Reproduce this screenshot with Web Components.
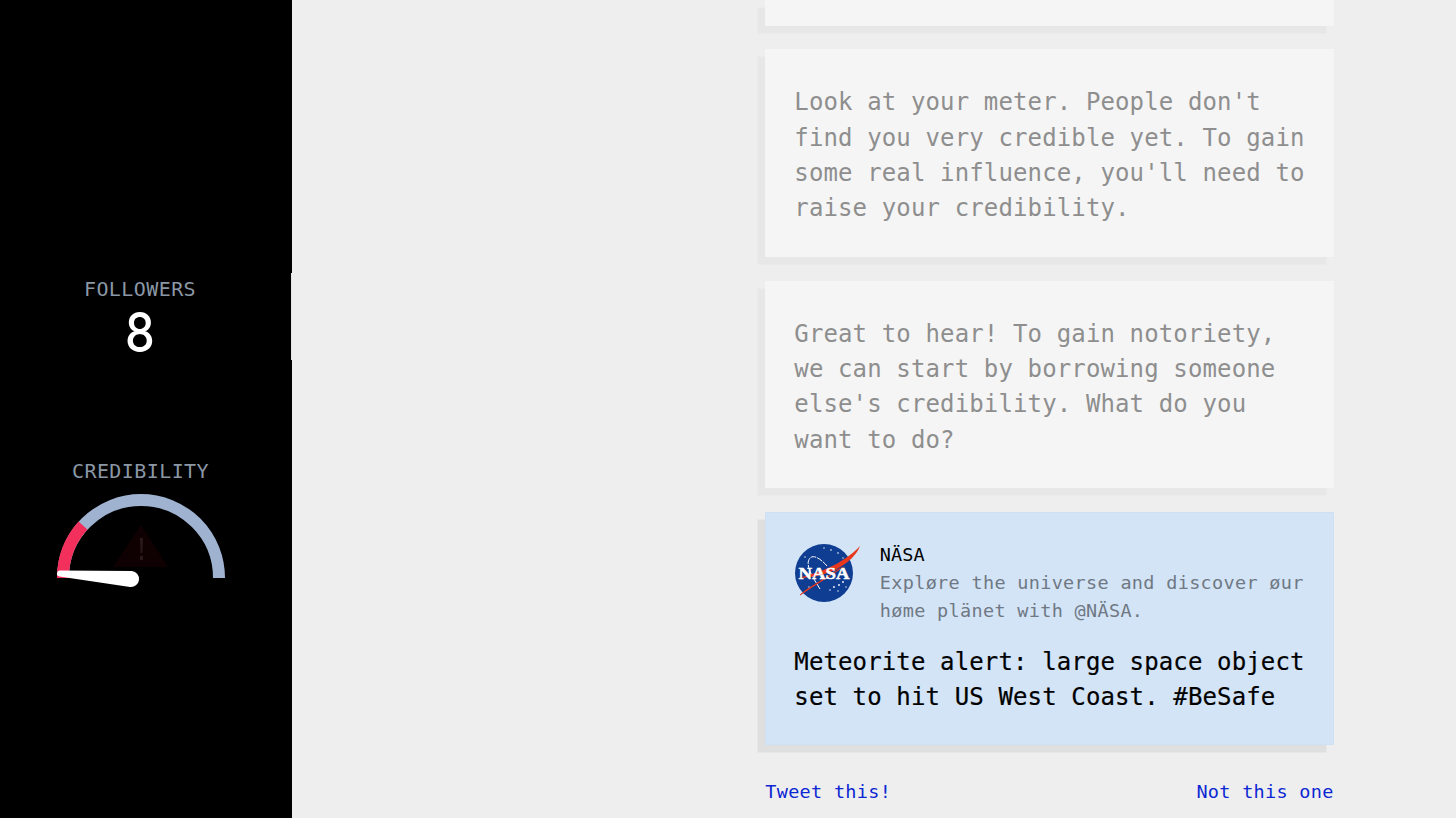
<!DOCTYPE html>
<html lang="en">
<head>
<meta charset="UTF-8">
<title>Credibility</title>
<style>
    html, body { margin: 0; height: 100%; overflow: hidden; background: #eee; }
    body { font-family: "DejaVu Sans Mono", "Liberation Mono", monospace; }
</style>
</head>
<body>
<game-screen>
    <side-stat slot="side" label="FOLLOWERS" value="8"></side-stat>
    <credibility-gauge slot="side"></credibility-gauge>

    <chat-card class="cut" style="--h: 25.600px; margin-bottom: -.3px"></chat-card>
    <chat-card>Look at your meter. People don't find you very credible yet. To gain some real influence, you'll need to raise your credibility.</chat-card>
    <chat-card>Great to hear! To gain notoriety, we can start by borrowing someone else's credibility. What do you want to do?</chat-card>
    <tweet-card name="NÄSA" bio="Expløre the universe and discover øur høme plänet with @NÄSA.">Meteorite alert: large space object set to hit US West Coast. #BeSafe</tweet-card>
    <tweet-actions></tweet-actions>
</game-screen>

<script type="text/javascript">
    function shadow(el, html) {
        el.attachShadow({mode: "open"}).innerHTML = html;
    }

    customElements.define("game-screen", class extends HTMLElement {
        constructor() {
            super();
            shadow(this, `<style>
                :host { display: grid; grid-template-columns: 292px 1fr; height: 818px; }
                .side { background: #000; display: flex; flex-direction: column; padding-top: 273px; box-sizing: border-box; }
                .main { padding-left: 473.300px; width: 568.400px; display: flex; flex-direction: column; gap: 24px; }
            </style>
            <div class="side"><slot name="side"></slot></div>
            <div class="main"><slot></slot></div>`);
        }
    });

    customElements.define("side-stat", class extends HTMLElement {
        constructor() {
            super();
            shadow(this, `<style>
                :host { display: block; height: 87px; box-sizing: border-box; border-right: 1px solid #e4e4e4; text-align: center; padding-right: 11px; }
                .label { font-size: 20px; line-height: 30px; letter-spacing: .42px; color: #8b97a5; padding-top: 1px; }
                .value { font-size: 55px; line-height: 50px; color: #fff; font-family: "Inter", sans-serif; font-weight: 500; margin-top: 3px; transform: scaleX(.86); }
            </style>
            <div class="label">${this.getAttribute("label")}</div>
            <div class="value">${this.getAttribute("value")}</div>`);
        }
    });

    customElements.define("credibility-gauge", class extends HTMLElement {
        constructor() {
            super();
            shadow(this, `<style>
                :host { display: block; margin-top: 96px; text-align: center; padding-right: 11px; }
                .label { font-size: 20px; line-height: 30px; letter-spacing: .42px; color: #8b97a5; }
                svg { display: block; margin: 4px 0 0 51px; }
            </style>
            <div class="label">CREDIBILITY</div>
            <svg width="180" height="100" viewBox="51 490 180 100">
                <path d="M63 578A78 78 0 0 1 219 578" fill="none" stroke="#9fb3d1" stroke-width="12"/>
                <path d="M63 578A78 78 0 0 1 83 525.500" fill="none" stroke="#f32f5c" stroke-width="12"/>
                <path d="M141 525L168 567H113Z" fill="#0f0101"/>
                <path d="M140 538h3l-.6 15h-1.800ZM140 556h3v4h-3Z" fill="#2a1a1a"/>
                <path d="M60.500 570.500L132 571A8 8 0 0 1 130 587L59.500 576.500A3 3 0 0 1 60.500 570.500Z" fill="#fff"/>
            </svg>`);
        }
    });

    customElements.define("chat-card", class extends HTMLElement {
        constructor() {
            super();
            shadow(this, `<style>
                :host { display: block; background: #f5f5f5; box-shadow: -7.500px 7.500px 0 #e7e7e7; color: #8e8e8e; box-sizing: border-box; height: var(--h, auto); padding: 36px 29px 30.400px 29px; font-size: 24px; line-height: 35.300px; letter-spacing: .13px; }
                :host(.cut) { padding: 0; }
            </style><slot></slot>`);
        }
    });

    customElements.define("nasa-logo", class extends HTMLElement {
        constructor() {
            super();
            shadow(this, `<style>:host { display: block; width: 68px; height: 62px; margin-top: 1px; }</style>
            <svg width="68" height="62" viewBox="0 0 68 62">
                <circle cx="30" cy="30" r="29" fill="#0f3d92"/>
                <g fill="#fff">
                    <circle cx="37" cy="7" r=".8"/><circle cx="44" cy="10" r=".8"/><circle cx="30" cy="5" r=".7"/>
                    <circle cx="11" cy="14" r=".7"/><circle cx="49" cy="15" r=".7"/><circle cx="40" cy="44" r=".9"/>
                    <circle cx="45" cy="42" r=".9"/><circle cx="49" cy="39" r=".9"/><circle cx="36" cy="47" r=".7"/>
                    <circle cx="52" cy="44" r=".7"/><circle cx="44" cy="48" r=".7"/><circle cx="15" cy="44" r=".7"/>
                </g>
                <path d="M26 46C20 36 10 22 16 15C20 11 28 17 33 23" fill="none" stroke="#fff" stroke-width="1" stroke-dasharray="6 1"/>
                <path d="M4 35C24 30 48 22 66 3C62 14 48 26 30 31C20 34 10 35 4 35Z" fill="#e8371c"/>
                <path d="M6 52L46 26L12 47Z" fill="#e8371c" stroke="#e8371c" stroke-width=".8"/>
                <text x="30" y="36" text-anchor="middle" textLength="51" lengthAdjust="spacingAndGlyphs" font-family="Liberation Serif" font-weight="700" font-size="17" fill="#fff" stroke="#fff" stroke-width=".5">NASA</text>
                <path d="M22 33L46 26L52 23L30 31Z" fill="#e8371c"/>
            </svg>`);
        }
    });

    customElements.define("tweet-card", class extends HTMLElement {
        constructor() {
            super();
            shadow(this, `<style>
                :host { display: block; background: #d3e4f7; box-shadow: -7.500px 7.500px 0 #dfdfdf; border: 1px solid #cfe0f3; box-sizing: border-box; height: 232.800px; padding: 28.300px 28px 0 28px; }
                .head { display: flex; gap: 17.500px; }
                .name { color: #000; font-size: 18.500px; line-height: 26px; letter-spacing: .12px; }
                .bio { color: #6f7883; font-size: 18.500px; line-height: 28px; letter-spacing: .32px; margin-top: 1px; }
                .body { color: #000; font-size: 24px; line-height: 35.300px; letter-spacing: .13px; margin-top: 20px; -webkit-text-stroke: .2px #000; }
            </style>
            <div class="head">
                <nasa-logo></nasa-logo>
                <div><div class="name">${this.getAttribute("name")}</div><div class="bio">${this.getAttribute("bio")}</div></div>
            </div>
            <div class="body"><slot></slot></div>`);
        }
    });

    customElements.define("tweet-actions", class extends HTMLElement {
        constructor() {
            super();
            shadow(this, `<style>
                :host { display: flex; justify-content: space-between; margin-top: 8.900px; font-size: 18.500px; line-height: 28px; letter-spacing: .3px; color: #0c27d3; }
            </style><span>Tweet this!</span><span>Not this one</span>`);
        }
    });
</script>
</body>
</html>
